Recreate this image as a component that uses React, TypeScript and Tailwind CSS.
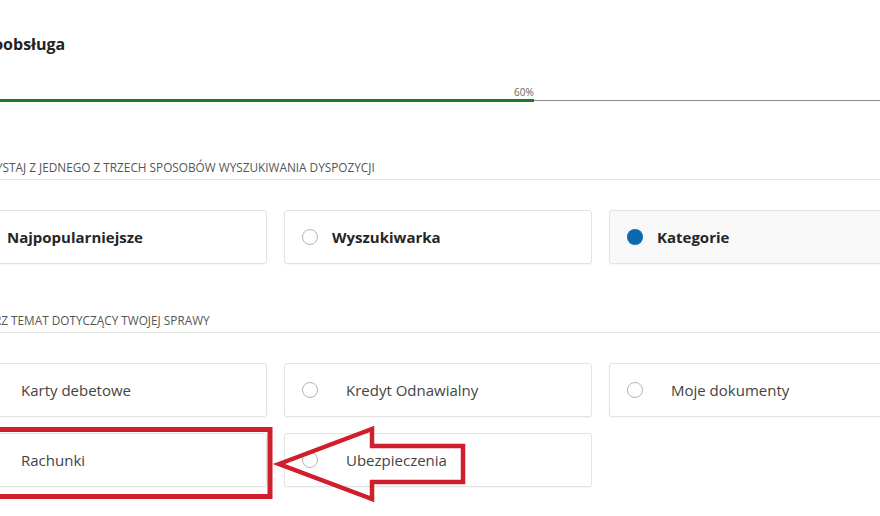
import React from 'react';

type Option = { label: string; selected?: boolean };

const methods: Option[] = [
  { label: 'Najpopularniejsze' },
  { label: 'Wyszukiwarka' },
  { label: 'Kategorie', selected: true },
];

const topics: Option[] = [
  { label: 'Karty debetowe' },
  { label: 'Kredyt Odnawialny' },
  { label: 'Moje dokumenty' },
  { label: 'Rachunki' },
  { label: 'Ubezpieczenia' },
];

const Radio = ({ selected }: { selected?: boolean }) =>
  selected ? (
    <span className="block w-4 h-4 rounded-full bg-[#0b6aae] shrink-0" />
  ) : (
    <span className="block w-4 h-4 rounded-full border border-[#b5b5b5] bg-white shrink-0" />
  );

const MethodCard = ({ opt }: { opt: Option }) => (
  <div
    className={`h-[54px] flex items-center pl-[17px] gap-[14px] rounded-[3px] border border-[#e3e3e3] shadow-[0_1px_2px_rgba(0,0,0,0.04)] ${
      opt.selected ? 'bg-[#f8f8f8]' : 'bg-white'
    }`}
  >
    <Radio selected={opt.selected} />
    <span className="text-[15px] font-bold text-[#262626]">{opt.label}</span>
  </div>
);

const TopicCard = ({ opt }: { opt: Option }) => (
  <div className="h-[54px] flex items-center pl-[17px] gap-[28px] rounded-[3px] border border-[#e3e3e3] bg-white shadow-[0_1px_2px_rgba(0,0,0,0.04)]">
    <Radio />
    <span className="text-[15px] text-[#444]">{opt.label}</span>
  </div>
);

const SectionLabel = ({ children }: { children: React.ReactNode }) => (
  <div className="border-b border-[#e6e6e6] pb-[5px] text-[11.8px] leading-[14px] uppercase text-[#555]">
    {children}
  </div>
);

export default function App() {
  return (
    <div
      className="relative w-[880px] h-[516px] overflow-hidden bg-white"
      style={{ fontFamily: '"Open Sans", "Noto Sans", sans-serif' }}
    >
      <div className="ml-[-41px] w-[958px] pt-[33px]">
        <h1 className="text-[16px] font-bold text-[#232323] leading-[22px]">Samoobsługa</h1>

        {/* pasek postępu */}
        <div className="mt-[31px]">
          <div className="w-[60%] flex justify-end">
            <span className="text-[10px] text-[#666] leading-[12px]">60%</span>
          </div>
          <div className="h-[3px] mt-[1px] flex items-center">
            <div className="h-[3px] w-[60%] bg-[#1f7a2c]" />
            <div className="h-px flex-1 bg-[#8a8a8a]" />
          </div>
        </div>

        <div className="mt-[58px]">
          <SectionLabel>Skorzystaj z jednego z trzech sposobów wyszukiwania dyspozycji</SectionLabel>
        </div>

        <div className="mt-[30px] grid grid-cols-[308px_308px_308px] gap-x-[17px]">
          {methods.map((m) => (
            <MethodCard key={m.label} opt={m} />
          ))}
        </div>

        <div className="mt-[49px]">
          <SectionLabel>Wybierz temat dotyczący twojej sprawy</SectionLabel>
        </div>

        <div className="mt-[30px] grid grid-cols-[308px_308px_308px] gap-x-[17px] gap-y-[16px]">
          {topics.map((t) => (
            <TopicCard key={t.label} opt={t} />
          ))}
        </div>
      </div>

      {/* adnotacja */}
      <svg
        className="absolute inset-0 pointer-events-none"
        width="880"
        height="516"
        viewBox="0 0 880 516"
      >
        <rect x="-10" y="429.5" width="280" height="67" fill="none" stroke="#d01f2c" strokeWidth="5" />
        <polygon
          points="279,464 372,429 372,446 463,446 463,482 372,482 372,499"
          fill="none"
          stroke="#d01f2c"
          strokeWidth="4.5"
          strokeLinejoin="miter"
        />
      </svg>
    </div>
  );
}
